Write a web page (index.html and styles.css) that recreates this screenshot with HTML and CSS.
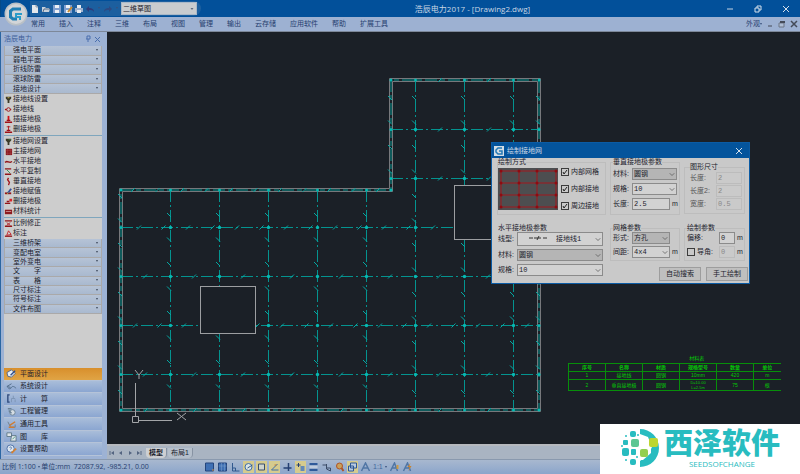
FILE: index.html
```html
<!DOCTYPE html>
<html lang="zh-CN">
<head>
  <meta charset="UTF-8">
  <meta name="viewport" content="width=device-width, initial-scale=1.0">
  <title>浩辰电力2017 - [Drawing2.dwg]</title>
  <link rel="stylesheet" href="styles.css">
</head>
<body>

<header class="titlebar">
  <button class="app-button" aria-label="应用程序菜单">
    <svg viewBox="0 0 24 24"><circle cx="12" cy="12" r="11.5" fill="#b9c0c6"/><circle cx="12" cy="12" r="10" fill="#d2d5d8"/><path d="M17 7H9L6.500 9v6L9 17h4" fill="none" stroke="#1f7fb4" stroke-width="3"/><path d="M18 12h-6v3h4v3" fill="none" stroke="#2a9cc9" stroke-width="2"/></svg>
  </button>
  <div class="quick">
    <button aria-label="新建"><svg viewBox="0 0 10 10"><path d="M2 1h4l2 2v6H2z" fill="#e4e8ec"/><path d="M6 1v2h2" fill="none" stroke="#8b98a8"/></svg></button>
    <button aria-label="打开"><svg viewBox="0 0 10 10"><path d="M1 8V3h3l1 1h3v1h1L8 8z" fill="#c8d2dc"/><path d="M2 8l1-3h6" fill="none" stroke="#586f8c"/></svg></button>
    <button aria-label="保存"><svg viewBox="0 0 10 10"><path d="M1 1h8v8H1z" fill="#7f9fd0"/><path d="M3 1h4v3H3zM3 6h4v3H3z" fill="#eef1f5"/></svg></button>
    <button aria-label="另存为"><svg viewBox="0 0 10 10"><path d="M1 1h8v8H1z" fill="#7f9fd0"/><path d="M3 1h4v3H3zM3 6h4v3H3z" fill="#eef1f5"/><path d="M9 3L5 8" stroke="#c98a2c" stroke-width="2"/></svg></button>
    <button aria-label="打印"><svg viewBox="0 0 10 10"><path d="M1 4h8v4H1z" fill="#9fb2cf"/><path d="M3 1h4v3H3zM3 6h4v3H3z" fill="#e8ecf2"/></svg></button>
    <button aria-label="放弃"><svg viewBox="0 0 10 10"><path d="M1 5l3-3v2c3 0 5 1 5 4-1-2-3-2-5-2v2z" fill="#2f3a78"/></svg></button>
    <i class="caret"></i>
    <button aria-label="重做"><svg viewBox="0 0 10 10"><path d="M9 5L6 2v2C3 4 1 5 1 8c1-2 3-2 5-2v2z" fill="#2d4a82"/></svg></button>
    <i class="caret"></i>
    <select class="workspace-select" aria-label="工作空间"><option>二维草图</option></select>
  </div>
  <h1 class="title">浩辰电力2017 - [Drawing2.dwg]</h1>
  <div class="window-buttons">
    <button aria-label="最小化"><svg viewBox="0 0 10 10"><path d="M2 5h6" stroke="#c5d3e2"/></svg></button>
    <button aria-label="还原"><svg viewBox="0 0 10 10"><path d="M2 4h4v4H2zM4 4V2h4v4H6" fill="none" stroke="#d5e0eb"/></svg></button>
    <button aria-label="关闭"><svg viewBox="0 0 10 10"><path d="M2 2l6 6M8 2L2 8" stroke="#d5e0eb"/></svg></button>
  </div>
</header>

<nav class="menubar">
  <a href="#">常用</a>
  <a href="#">插入</a>
  <a href="#">注释</a>
  <a href="#">三维</a>
  <a href="#">布局</a>
  <a href="#">视图</a>
  <a href="#">管理</a>
  <a href="#">输出</a>
  <a href="#">云存储</a>
  <a href="#">应用软件</a>
  <a href="#">帮助</a>
  <a href="#">扩展工具</a>
  <div class="doc-buttons">
    <a href="#">外观<i class="caret"></i></a>
    <button aria-label="最小化文档"><svg viewBox="0 0 8 8"><path d="M2 6h4" stroke="#444b58"/></svg></button>
    <button aria-label="还原文档"><svg viewBox="0 0 8 8"><path d="M1 3h5v4H1z" fill="#aebdd4" stroke="#6c7686"/><path d="M2 2h5" stroke="#444b58" stroke-width="2"/></svg></button>
    <button aria-label="关闭文档"><svg viewBox="0 0 8 8"><path d="M1 1l6 6M7 1L1 7" stroke="#444b58" stroke-width="1.500"/></svg></button>
  </div>
</nav>

<main class="workspace">
  <aside class="sidebar">
    <div class="sidebar-head">
      <h2>浩辰电力</h2>
      <button aria-label="固定"><svg viewBox="0 0 8 8"><path d="M2 4h4M3 4V1h3v3M4 4v3" fill="none" stroke="#4a6fae"/></svg></button>
      <button aria-label="关闭面板"><svg viewBox="0 0 8 8"><path d="M1 2l5 5M6 2L1 7" stroke="#4a6fae"/></svg></button>
    </div>
    <div class="panel">
      <div class="categories five">
        <button>强电平面</button>
        <button>弱电平面</button>
        <button>折线防雷</button>
        <button>滚球防雷</button>
        <button>接地设计</button>
      </div>
      <div class="tools">
        <button><svg viewBox="0 0 10 10"><path d="M2 2h6v2L6 6v3H4V6L2 4z" fill="#3c3a28"/><path d="M4 3h2" stroke="#c9b24a"/></svg>接地线设置</button>
        <button><svg viewBox="0 0 10 10"><path d="M1 5h7" stroke="#9e1218" stroke-width="1.500"/><circle cx="5" cy="5" r="2" fill="#cdcdcd" stroke="#9e1218"/></svg>接地线</button>
        <button><svg viewBox="0 0 10 10"><path d="M5 1v6" stroke="#d01018" stroke-width="2"/><path d="M1 8h8M3 6h4" stroke="#a01018" stroke-width="1.500"/></svg>插接地极</button>
        <button><svg viewBox="0 0 10 10"><path d="M5 1v6M3 2h4" stroke="#b01820"/><path d="M1 8h8M3 6h4" stroke="#a01018" stroke-width="1.500"/></svg>删接地极</button>
      </div>
      <div class="tools">
        <button><svg viewBox="0 0 10 10"><path d="M2 2h6v2L6 6v3H4V6L2 4z" fill="#3c3a28"/><path d="M5 3h3" stroke="#3f7d4c"/></svg>接地网设置</button>
        <button><svg viewBox="0 0 10 10"><path d="M2 2h7v7H2z" fill="#8e1a20"/><path d="M4 2v7M7 2v7M2 4h7M2 7h7" stroke="#a84a4e" stroke-width=".5"/></svg>主接地网</button>
        <button><svg viewBox="0 0 10 10"><path d="M1 6l2-1 4 1 2-1" fill="none" stroke="#93141a" stroke-width="1.500"/></svg>水平接地</button>
        <button><svg viewBox="0 0 10 10"><path d="M1 2h7M1 8h7" stroke="#93141a" stroke-width="1.500"/><path d="M3 3l4 4" stroke="#2f8d4b"/></svg>水平复制</button>
        <button><svg viewBox="0 0 10 10"><path d="M5 1L4 3l2 3-1 3" fill="none" stroke="#a3141a" stroke-width="1.500"/></svg>垂直接地</button>
        <button><svg viewBox="0 0 10 10"><path d="M1 7h7" stroke="#93141a" stroke-width="2"/><path d="M4 7l4-5" stroke="#32509c" stroke-width="2"/><path d="M3 8l2-2" stroke="#cbb234"/></svg>接地赋值</button>
        <button><svg viewBox="0 0 10 10"><path d="M1 7h6M3 5h3" stroke="#93141a" stroke-width="1.500"/><path d="M6 2h3v3H6z" fill="#d8252b"/></svg>删接地极</button>
        <button><svg viewBox="0 0 10 10"><path d="M1 3h8v5H1z" fill="#8e1a20"/><path d="M2 5h6" stroke="#c98e90"/></svg>材料统计</button>
      </div>
      <div class="tools">
        <button><svg viewBox="0 0 10 10"><path d="M1 2h8M1 8h8" stroke="#93141a" stroke-width="1.500"/><path d="M3 4l4 3M7 4L3 7" stroke="#b3242a"/></svg>比例修正</button>
        <button><svg viewBox="0 0 10 10"><path d="M1 8h8" stroke="#93141a" stroke-width="1.500"/><path d="M3 7l2-5 3 4z" fill="none" stroke="#c3242a"/></svg>标注</button>
      </div>
      <div class="categories eight">
        <button>三维桥架</button>
        <button>变配电室</button>
        <button>室外变电</button>
        <button>文　　字</button>
        <button>表　　格</button>
        <button>尺寸标注</button>
        <button>符号标注</button>
        <button>文件布图</button>
      </div>
      <div class="modules">
        <button class="active"><svg viewBox="0 0 12 12"><path d="M1 5l5-3 4 4-4 4-4-1z" fill="#e9edf2" stroke="#4b658e"/><path d="M5 8l5-5" stroke="#2d4f8f" stroke-width="1.500"/></svg>平面设计</button>
        <button><svg viewBox="0 0 12 12"><path d="M6 3L1 6l4 1M2 7c1 2 3 2 4 0s3-1 5 1" fill="none" stroke="#506b88"/></svg>系统设计</button>
        <button><svg viewBox="0 0 12 12"><path d="M4 2H2v8h2" fill="none" stroke="#2f4a7c" stroke-width="1.500"/><path d="M6 10V6M8 3v3M10 10V7M6 6h4" stroke="#7e95b5"/></svg>计　　算</button>
        <button><svg viewBox="0 0 12 12"><circle cx="7" cy="7" r="3" fill="#d5dde4" stroke="#6a8196"/><path d="M2 3h4M3 5l3 3" stroke="#6a8196" stroke-width="1.500"/></svg>工程管理</button>
        <button><svg viewBox="0 0 12 12"><path d="M2 3l3 6h5V6" fill="none" stroke="#6f7f8c"/><path d="M4 7l6-4M3 9h6" stroke="#d07c30" stroke-width="1.500"/></svg>通用工具</button>
        <button><svg viewBox="0 0 12 12"><path d="M1 2h5v4H1zM6 5h5v6H5z" fill="#dfe6ea" stroke="#5f7888"/><path d="M7 9l3-3" stroke="#4d9a7b"/></svg>图　　库</button>
        <button><svg viewBox="0 0 12 12"><circle cx="5" cy="5" r="4" fill="#dce6f0" stroke="#4a6ea5"/><path d="M4 4c1-2 3 0 1 2" fill="none" stroke="#4a6ea5"/><path d="M6 10l5-5" stroke="#d28133" stroke-width="2"/></svg>设置帮助</button>
      </div>
    </div>
  </aside>

  <section class="document">
    <div class="canvas">
      <svg class="plan" id="plan" width="693" height="412" viewBox="107 32 693 412" role="img" aria-label="接地网平面图"></svg>

      <table class="materials">
        <caption>材料表</caption>
        <tr><th>序号</th><th>名称</th><th>材质</th><th>规格型号</th><th>数量</th><th>单位</th></tr>
        <tr><td>1</td><td>接地线</td><td>圆钢</td><td>10mm</td><td>420</td><td>m</td></tr>
        <tr><td>2</td><td>垂直接地极</td><td>圆钢</td><td class="two-line">D=10.00<br>L=2.5m</td><td>75</td><td>根</td></tr>
      </table>

      <form class="dialog" aria-label="绘制接地网">
        <div class="dialog-title">
          <svg viewBox="0 0 10 10"><path d="M0 0h10v10H0z" fill="#d3dde5"/><path d="M8 2H4L2 4v2l2 2h4V5H5" fill="none" stroke="#2479b5" stroke-width="1.500"/></svg>
          <h2>绘制接地网</h2>
          <button type="button" aria-label="关闭"><svg viewBox="0 0 8 8"><path d="M1 1l6 6M7 1L1 7" stroke="#d5e0eb"/></svg></button>
        </div>
        <div class="dialog-body">
          <fieldset class="mode">
            <legend>绘制方式</legend>
            <svg class="preview" viewBox="0 0 60 42">
              <path d="M0 0h60v42H0z" fill="#4d4e50"/>
              <path d="M3 3h55v36H3zM21 3v36M39 3v36M3 15h55M3 27h55" fill="none" stroke="#a3161c"/>
              <path d="M3 3h0M21 3h0M39 3h0M58 3h0M3 15h0M21 15h0M39 15h0M58 15h0M3 27h0M21 27h0M39 27h0M58 27h0M3 39h0M21 39h0M39 39h0M58 39h0" stroke="#8e0a10" stroke-width="3" stroke-linecap="round"/>
            </svg>
            <div class="checks">
              <label><input type="checkbox" checked>内部网格</label>
              <label><input type="checkbox" checked>内部接地</label>
              <label><input type="checkbox" checked>周边接地</label>
            </div>
          </fieldset>
          <fieldset class="vertical">
            <legend>垂直接地极参数</legend>
            <div class="field"><label for="v-mat">材料:</label><select id="v-mat" class="gray"><option>圆钢</option></select></div>
            <div class="field"><label for="v-spec">规格:</label><select id="v-spec"><option>10</option></select></div>
            <div class="field"><label for="v-len">长度:</label><input id="v-len" type="text" value="2.5"><span class="unit">m</span></div>
          </fieldset>
          <fieldset class="size" disabled>
            <legend>图形尺寸</legend>
            <div class="field"><label for="s-len">长度:</label><input id="s-len" type="text" value="2"></div>
            <div class="field"><label for="s-len2">长度2:</label><input id="s-len2" type="text" value="2"></div>
            <div class="field"><label for="s-width">宽度:</label><input id="s-width" type="text" value="0.5"></div>
          </fieldset>
          <fieldset class="horizontal">
            <legend>水平接地极参数</legend>
            <div class="field"><label for="h-line">线型:</label><select id="h-line" class="linetype"><option>接地线1</option></select></div>
            <div class="field"><label for="h-mat">材料:</label><select id="h-mat" class="gray"><option>圆钢</option></select></div>
            <div class="field"><label for="h-spec">规格:</label><select id="h-spec"><option>10</option></select></div>
          </fieldset>
          <fieldset class="mesh">
            <legend>网格参数</legend>
            <div class="field"><label for="g-form">形式:</label><select id="g-form" class="gray"><option>方孔</option></select><span class="unit"></span></div>
            <div class="field"><label for="g-gap">间距:</label><select id="g-gap"><option>4x4</option></select><span class="unit">m</span></div>
          </fieldset>
          <fieldset class="draw">
            <legend>绘制参数</legend>
            <div class="field"><label for="d-off">偏移:</label><input id="d-off" type="text" value="0"><span class="unit">m</span></div>
            <div class="field"><label><input type="checkbox">导角:</label><input type="text" value="0" aria-label="导角" disabled><span class="unit">m</span></div>
          </fieldset>
          <div class="actions">
            <button type="button">自动搜索</button>
            <button type="button">手工绘制</button>
          </div>
        </div>
      </form>
    </div>

    <div class="layout-tabs">
      <button aria-label="第一个"><svg viewBox="0 0 8 8"><path d="M2 2v4" stroke="#536480"/><path d="M6 2v4L3 4z" fill="#536480"/></svg></button>
      <button aria-label="上一个"><svg viewBox="0 0 8 8"><path d="M5 2v4L2 4z" fill="#536480"/></svg></button>
      <button aria-label="下一个"><svg viewBox="0 0 8 8"><path d="M3 2v4l3-2z" fill="#536480"/></svg></button>
      <button aria-label="最后一个"><svg viewBox="0 0 8 8"><path d="M6 2v4" stroke="#536480"/><path d="M2 2v4l3-2z" fill="#536480"/></svg></button>
      <a class="tab current" href="#">模型</a>
      <a class="tab" href="#">布局1</a>
    </div>
  </section>
</main>

<footer class="statusbar">
  <p class="coords">比例 1:100 <i class="caret"></i> 单位:mm&nbsp; 72087.92, -985.21, 0.00</p>
  <div class="toggles">
    <button aria-label="捕捉"><svg viewBox="0 0 10 10"><path d="M1 1h8v8H1z" fill="#3f70b4" stroke="#24457c"/><path d="M8 8h1" stroke="#d08a3a" stroke-width="2"/></svg></button>
    <button aria-label="栅格"><svg viewBox="0 0 10 10"><path d="M1 1h8v8H1z" fill="#3f70b4" stroke="#24457c"/><path d="M4 1v8M7 1v8M1 4h8" stroke="#7ea0cc" stroke-width=".5"/></svg></button>
    <button aria-label="正交"><svg viewBox="0 0 10 10"><path d="M2 1v8h7M2 6h3v3" fill="none" stroke="#31598e"/></svg></button>
    <button class="on" aria-label="极轴"><svg viewBox="0 0 10 10"><circle cx="5" cy="5" r="3.500" fill="#dce6e4" stroke="#3f6ea8"/><path d="M4 6l5-3" stroke="#31598e"/></svg></button>
    <button class="on" aria-label="对象捕捉"><svg viewBox="0 0 10 10"><path d="M2 2h6v6H2z" fill="#cfd4cc" stroke="#3a4f6c"/></svg></button>
    <button class="on" aria-label="对象追踪"><svg viewBox="0 0 10 10"><path d="M8 2L2 8h7" fill="none" stroke="#3f6ea8"/><path d="M5 3h2" stroke="#c47a2c"/></svg></button>
    <button aria-label="动态输入"><svg viewBox="0 0 10 10"><path d="M6 1v8M1 6h8" stroke="#243f72" stroke-width="1.500"/></svg></button>
    <button class="on" aria-label="动态UCS"><svg viewBox="0 0 10 10"><path d="M3 1v4M1 3h4" stroke="#243f72"/><path d="M5 4h4v5H5z" fill="#6389b8"/></svg></button>
    <button aria-label="线宽"><svg viewBox="0 0 10 10"><path d="M1 2h8M1 8h8" stroke="#2f5a9a" stroke-width="2"/><path d="M1 5h8" stroke="#e3e8ee"/></svg></button>
    <button aria-label="循环选择"><svg viewBox="0 0 10 10"><path d="M1 3h4M5 2v5l4 2V6H5" fill="none" stroke="#3c4d68"/></svg></button>
    <button aria-label="缩放"><svg viewBox="0 0 10 10"><circle cx="5" cy="4" r="3" fill="#c9a15c" stroke="#b05325"/><path d="M7 6l2 3" stroke="#b05325" stroke-width="2"/></svg></button>
    <button class="on" aria-label="快捷特性"><svg viewBox="0 0 10 10"><path d="M3 1h6v5H3zM1 4h5v5H1z" fill="#b9cbe0" stroke="#2d5794"/></svg></button>
    <button aria-label="注释比例"><svg viewBox="0 0 10 10"><path d="M1 9l4-8 4 8M3 6h4" fill="none" stroke="#5076a5" stroke-width="1.500"/></svg></button>
    <span class="scale">1:1 <i class="caret"></i></span>
    <button aria-label="注释可见性"><svg viewBox="0 0 10 10"><path d="M1 9l4-8 3 8M3 6h4" fill="none" stroke="#5076a5" stroke-width="1.500"/><path d="M7 3h2v4H7z" fill="#cd9a43"/></svg></button>
    <button aria-label="自动缩放"><svg viewBox="0 0 10 10"><path d="M1 9l4-8 3 8M3 6h4" fill="none" stroke="#5076a5" stroke-width="1.500"/><path d="M8 1L5 5h2L6 9l3-5H7z" fill="#c9832c"/></svg></button>
  </div>
</footer>

<div class="watermark">
  <svg viewBox="0 0 40 40">
    <path d="M20 1a19 19 0 0 1 0 38v-6l8-6 4-8-4-10-8-3z" fill="#28bcc0"/>
    <path d="M19 9l4 0 8 7v9l-8 7h-4z" fill="#fff"/>
    <rect x="11" y="11" width="8" height="8" rx="2" fill="#5cc693"/>
    <rect x="20" y="21" width="8" height="8" rx="2" fill="#93cf4f"/>
    <rect x="29" y="10" width="9" height="9" rx="2" fill="#bcd631"/>
    <rect x="2" y="20" width="7" height="8" rx="2" fill="#28bcc0"/>
    <rect x="11" y="21" width="5" height="6" rx="1" fill="#28bcc0"/>
    <rect x="10" y="31" width="6" height="6" rx="2" fill="#28bcc0"/>
    <rect x="10" y="3" width="6" height="6" rx="2" fill="#28bcc0"/>
    <rect x="3" y="12" width="5" height="5" rx="1" fill="#28bcc0"/>
    <circle cx="2" cy="18" r="1" fill="#28bcc0"/><circle cx="6" cy="32" r="1" fill="#28bcc0"/><circle cx="17" cy="29" r="1" fill="#28bcc0"/><circle cx="18" cy="7" r="1" fill="#28bcc0"/><circle cx="6" cy="8" r="1" fill="#28bcc0"/>
  </svg>
  <div class="brand">
    <strong>西泽软件</strong>
    <span>SEEDSOFCHANGE</span>
  </div>
</div>

<script src="plan.js"></script>
</body>
</html>
```
FILE: styles.css
```css
* {
  box-sizing: border-box;
}

body {
  display: flex;
  flex-direction: column;
  min-height: 100vh;
  margin: 0;
  overflow: hidden;
  font-family: "Liberation Sans", "Noto Sans CJK SC", sans-serif;
  font-size: 7px;
  line-height: 8px;
  color: #1c222c;
  background: #9aafce;
}

h1, h2, p {
  margin: 0;
  font-size: inherit;
  font-weight: normal;
}

button {
  display: flex;
  align-items: center;
  padding: 0;
  border: none;
  background: none;
  color: inherit;
  font: inherit;
}

a {
  color: inherit;
  text-decoration: none;
}

svg {
  display: block;
  flex: none;
}

input, select {
  min-width: 0;
  margin: 0;
  font: inherit;
  color: inherit;
}

.caret {
  display: inline-block;
  width: 0;
  border: 1px solid transparent;
  border-top: 2px solid #38507c;
  vertical-align: middle;
}

/* title bar */
.titlebar {
  display: flex;
  align-items: center;
  height: 17px;
  padding-left: 3px;
  background: #02509a;
  border-left: 1px solid #064b88;
}

.app-button {
  align-self: flex-start;
  z-index: 1;
}

.app-button svg {
  width: 24px;
  height: 24px;
  margin-top: 2px;
}

.quick {
  display: flex;
  align-items: center;
  gap: 1px;
  height: 15px;
  margin-left: 2px;
  padding-right: 4px;
  background: #1c5f9f;
  border-radius: 0 8px 8px 0;
}

.quick svg {
  width: 10px;
  height: 10px;
}

.quick .caret {
  margin: 0 2px;
}

.workspace-select {
  appearance: none;
  width: 76px;
  height: 13px;
  padding: 0 1px;
  border: 1px solid #a9b8c8;
  border-radius: 0;
  background: #c9cccf url("data:image/svg+xml,%3Csvg xmlns='http://www.w3.org/2000/svg' viewBox='0 0 8 8'%3E%3Cpath d='M2 3h4L4 5z' fill='%23384a66'/%3E%3C/svg%3E") right 1px center / 6px 6px no-repeat;
}

.title {
  flex: 1;
  padding-left: 28px;
  text-align: center;
  font-family: "Open Sans", "Noto Sans CJK SC", sans-serif;
  font-size: 8px;
  color: #c9d6e4;
}

.window-buttons {
  display: flex;
}

.window-buttons button {
  justify-content: center;
  width: 28px;
}

.window-buttons svg {
  width: 10px;
  height: 10px;
}

/* menu bar */
.menubar {
  display: flex;
  align-items: center;
  gap: 14px;
  height: 15px;
  padding: 0 2px 0 31px;
  background: #9db1d2;
  border-bottom: 1px solid #7d8899;
  color: #27406f;
}

.doc-buttons {
  display: flex;
  align-items: center;
  gap: 4px;
  margin-left: auto;
}

.doc-buttons svg {
  width: 8px;
  height: 8px;
}

/* side panel */
.workspace {
  display: flex;
  flex: 1;
  min-height: 0;
}

.sidebar {
  display: flex;
  flex-direction: column;
  width: 107px;
  padding: 0 5px 3px 3px;
  background: #9db2d4;
  border-left: 1px solid #2b66a2;
}

.sidebar-head {
  display: flex;
  align-items: center;
  gap: 2px;
  height: 14px;
  color: #3d5f99;
}

.sidebar-head h2 {
  flex: 1;
}

.sidebar-head svg {
  width: 8px;
  height: 8px;
}

.panel {
  display: flex;
  flex: 1;
  flex-direction: column;
  background: #cdcdcd;
}

.categories {
  display: grid;
  grid-auto-rows: 1fr;
}

.five {
  height: 48px;
}

.eight {
  height: 75px;
}

.categories button {
  justify-content: space-between;
  padding: 0 3px 0 8px;
  background: linear-gradient(#b6c3d6, #a9b9cf);
  border: 1px solid #aaa9a9;
  border-top: none;
}

.categories button::after {
  content: "";
  border: 1px solid transparent;
  border-top: 2px solid #3e4a5c;
}

.tools {
  padding-bottom: 1px;
}

.tools + .tools {
  border-top: 1px solid #7fa6bd;
}

.tools button {
  width: 100%;
  height: 10px;
}

.tools svg {
  width: 9px;
  height: 9px;
}

.modules {
  display: grid;
  grid-auto-rows: 1fr;
  height: 88px;
  margin-top: auto;
}

.modules button {
  gap: 3px;
  padding-left: 2px;
  background: linear-gradient(#a9bdd9, #8ba6d1);
  border-bottom: 1px solid #b5c3d8;
}

.modules .active {
  background: linear-gradient(#d88f2c, #e0a445);
}

.modules svg {
  width: 11px;
  height: 11px;
}

/* drawing area */
.document {
  display: flex;
  flex: 1;
  flex-direction: column;
  min-width: 0;
}

.canvas {
  position: relative;
  flex: 1;
  overflow: hidden;
  background: #1b2027;
}

.wall {
  fill: none;
  stroke: #77787c;
}

.mesh-line {
  fill: none;
  stroke: #04938f;
  stroke-dasharray: 12 3 2 3;
}

.edge-line {
  fill: none;
  stroke: #04938f;
  stroke-dasharray: 12 3 5 3;
}

.tick {
  fill: none;
  stroke: #04a8a3;
}

.node {
  fill: #06b9b2;
}

.room {
  fill: #1b2027;
  stroke: #9c9ea1;
}

.ucs {
  fill: none;
  stroke: #a3a5a8;
}

.materials {
  position: absolute;
  top: 324px;
  left: 461px;
  width: 211px;
  border-collapse: collapse;
  table-layout: fixed;
  font-size: 5px;
  line-height: 5px;
  color: #05c805;
}

.materials caption {
  height: 7px;
  padding-left: 45px;
}

.materials th,
.materials td {
  width: 37px;
  height: 8px;
  padding: 0;
  border: 1px solid #078f0a;
  text-align: center;
}

.materials th:last-child,
.materials td:last-child {
  width: 27px;
  border-right: none;
}

.materials .two-line {
  font-size: 4px;
}

/* grounding grid dialog */
.dialog {
  position: absolute;
  top: 110px;
  left: 384px;
  width: 259px;
  border: 1px solid #0b5ba4;
  background: #c9c9c9;
}

.dialog-title {
  display: flex;
  align-items: center;
  gap: 3px;
  height: 15px;
  padding: 0 6px 0 2px;
  background: #04549c;
  color: #cfdbe7;
}

.dialog-title h2 {
  flex: 1;
}

.dialog-title > svg {
  width: 10px;
  height: 10px;
}

.dialog-title button svg {
  width: 8px;
  height: 8px;
}

.dialog-body {
  display: grid;
  grid-template-columns: 109px 70px 1fr;
  grid-template-rows: 66px 37px 20px;
  column-gap: 4px;
  padding: 0 1px 2px 5px;
}

fieldset {
  display: flex;
  flex-direction: column;
  gap: 2px;
  min-width: 0;
  margin: 0;
  padding: 0 2px;
  border: 1px solid #bdbdbd;
}

legend {
  height: 8px;
  padding: 0;
}

.mode {
  flex-direction: row;
  gap: 3px;
  margin-bottom: 9px;
  padding: 2px 0 0;
}

.preview {
  width: 60px;
  height: 42px;
}

.checks {
  display: flex;
  flex-direction: column;
  justify-content: space-between;
  height: 42px;
}

.checks label,
.field label {
  display: flex;
  align-items: center;
  gap: 2px;
  white-space: nowrap;
}

.field label {
  min-width: 19px;
}

[type="checkbox"] {
  appearance: none;
  width: 8px;
  height: 8px;
  border: 1px solid #3c3c3c;
}

[type="checkbox"]:checked {
  background: url("data:image/svg+xml,%3Csvg xmlns='http://www.w3.org/2000/svg' viewBox='0 0 6 6'%3E%3Cpath d='M1 3l1 2 3-4' fill='none' stroke='%23222'/%3E%3C/svg%3E");
}

.field {
  display: flex;
  align-items: center;
}

.field [type="text"],
.field select {
  flex: 1;
  width: 0;
  height: 12px;
  padding: 0 1px;
  border: 1px solid #8b8b8b;
  border-radius: 0;
  background: #d2d2d2;
  font-family: "Liberation Mono", "Noto Sans CJK SC", monospace;
}

.field select {
  appearance: none;
  background: #d2d2d2 url("data:image/svg+xml,%3Csvg xmlns='http://www.w3.org/2000/svg' viewBox='0 0 8 8'%3E%3Cpath d='M1 3l3 3 3-3' fill='none' stroke='%23555'/%3E%3C/svg%3E") right 1px center / 6px 6px no-repeat;
}

.field .gray {
  background-color: #b5b5b5;
}

.field .linetype {
  height: 14px;
  padding-left: 38px;
  background: url("data:image/svg+xml,%3Csvg xmlns='http://www.w3.org/2000/svg' viewBox='0 0 20 6'%3E%3Cpath d='M1 3h4M6 3h7M9 5l2-4M15 3h4' fill='none' stroke='%23333'/%3E%3C/svg%3E") 10px 2px / 20px 6px no-repeat,
    #d2d2d2 url("data:image/svg+xml,%3Csvg xmlns='http://www.w3.org/2000/svg' viewBox='0 0 8 8'%3E%3Cpath d='M1 3l3 3 3-3' fill='none' stroke='%23555'/%3E%3C/svg%3E") right 1px center / 6px 6px no-repeat;
}

.unit {
  width: 7px;
  padding-left: 2px;
}

.vertical {
  gap: 3px;
  margin-bottom: 9px;
  padding-top: 2px;
}

.size {
  gap: 1px;
  margin: 5px 3px 10px 0;
  padding: 1px 2px 0 5px;
}

.size label {
  width: 26px;
  color: #555;
}

.field input:disabled {
  border-color: #bcbcbc;
  background: #cacaca;
  color: #888;
}

.horizontal {
  grid-row: 2 / 4;
  gap: 3px;
  padding: 0 2px 0 0;
  border-color: transparent;
}

.draw {
  margin-right: 3px;
}

.draw .field label {
  min-width: 32px;
}

.actions {
  display: flex;
  grid-column: 2 / 4;
  align-items: flex-end;
  justify-content: flex-end;
  gap: 5px;
}

.actions button {
  justify-content: center;
  width: 42px;
  height: 14px;
  border: 1px solid #9d9d9d;
  background: #bfbfbf;
}

/* layout tabs */
.layout-tabs {
  display: flex;
  align-items: center;
  height: 15px;
  padding-left: 1px;
  background: #a9b4c2;
  border-top: 2px solid #b6b9be;
}

.layout-tabs svg {
  width: 8px;
  height: 8px;
  margin-right: 1px;
}

.tab {
  margin-left: 1px;
  padding: 1px 3px;
  background: #b5bfcb;
  border-right: 1px solid #8793a3;
  border-radius: 0 0 4px 4px;
}

.current {
  margin-left: 2px;
  background: #cdcfd2;
  font-weight: bold;
}

/* status bar */
.statusbar {
  display: flex;
  align-items: center;
  height: 15px;
  padding-left: 2px;
  background: linear-gradient(#a8b8cf, #8ba5cb);
  border-top: 1px solid #8999ae;
  color: #27406f;
}

.coords {
  width: 202px;
  font-family: "Open Sans", "Noto Sans CJK SC", sans-serif;
}

.toggles {
  display: flex;
  align-items: center;
  gap: 2px;
}

.toggles button {
  padding: 1px 0;
}

.toggles svg {
  width: 11px;
  height: 10px;
}

.toggles .on {
  background: #d6cb8e;
}

.scale {
  color: #44689b;
}

/* logo over the corner of the window */
.watermark {
  position: absolute;
  right: 0;
  bottom: 0;
  display: flex;
  align-items: flex-start;
  gap: 4px;
  width: 200px;
  height: 50px;
  padding: 4px 0 0 20px;
  background: #fff;
  color: #28bcc0;
}

.watermark svg {
  width: 40px;
  height: 40px;
}

.brand {
  display: flex;
  flex-direction: column;
  align-items: center;
}

.brand strong {
  font-size: 29px;
  line-height: 32px;
  font-weight: 900;
}

.brand span {
  font-family: "Open Sans", sans-serif;
  font-size: 8px;
}
```
FILE: plan.js
```js
const plan = document.getElementById('plan');

function add(name, attrs) {
  const el = document.createElementNS('http://www.w3.org/2000/svg', name);
  for (const key in attrs) {
    el.setAttribute(key, attrs[key]);
  }
  plan.appendChild(el);
}

function tickH(x, y) {
  add('path', { class: 'tick', d: `M${x - 2} ${y + 2}l4 -4` });
}

function tickV(x, y) {
  add('path', { class: 'tick', d: `M${x - 3} ${y - 2}l4 4` });
}

// walls and the perimeter conductor between them
add('path', { class: 'wall', d: 'M119.5 188.500H389.500V78.500H540.500V411.500H119.500Z' });
add('path', { class: 'wall', d: 'M122.5 191.500H392.500V81.500H537.500V408.500H122.500Z' });
add('path', { class: 'edge-line', d: 'M121 190H391V80H539V410H121Z' });

const columns = [170, 219, 268, 317, 366, 415, 464, 513];

// y of the row, x of its first tick, distance between ticks
const rows = [
  [129, 440, 49],
  [178, 440, 49],
  [227, 139, 24.5],
  [276, 145, 49],
  [325, 135, 24.5],
  [374, 145, 49]
];

// columns right of the step run up to the top wall
columns.forEach(x => {
  const top = x > 391 ? 80 : 190;
  add('path', { class: 'mesh-line', d: `M${x + 0.5} ${top}V410` });
  for (let y = top === 80 ? 98 : 215; y < 405; y += 24.5) {
    tickV(x, y);
  }
  add('circle', { class: 'node', cx: x + 0.5, cy: top, r: 1.5 });
  add('circle', { class: 'node', cx: x + 0.5, cy: 410, r: 1.5 });
});

rows.forEach(([y, first, step]) => {
  const left = y < 190 ? 391 : 121;
  add('path', { class: 'mesh-line', d: `M${left} ${y + 0.5}H539` });
  for (let x = first; x < 535; x += step) {
    tickH(x, y + 0.5);
  }
  add('circle', { class: 'node', cx: left, cy: y + 0.5, r: 1.5 });
  add('circle', { class: 'node', cx: 539, cy: y + 0.5, r: 1.5 });
  columns.filter(x => x > left).forEach(x => {
    add('circle', { class: 'node', cx: x + 0.5, cy: y + 0.5, r: 1.7 });
  });
});

// ticks along the perimeter
for (let x = 133; x < 391; x += 24.5) {
  tickH(x, 190);
}
tickH(440, 80);
tickH(489, 80);
for (let x = 146; x < 535; x += 49) {
  tickH(x, 410);
}
for (let y = 98; y < 405; y += 24.5) {
  tickV(539, y);
  tickV(y < 190 ? 391 : 121, y);
}

[[121, 190], [391, 190], [391, 80], [539, 80], [539, 410], [121, 410]].forEach(([x, y]) => {
  add('circle', { class: 'node', cx: x, cy: y, r: 1.5 });
});

add('rect', { class: 'room', x: 200.5, y: 286.5, width: 55, height: 47 });
add('rect', { class: 'room', x: 454.5, y: 185.5, width: 56, height: 54 });

// coordinate system icon
add('path', { class: 'ucs', d: 'M135.5 383V417M138 420.500H172M132.500 416.500H138.500V422.500H132.500Z' });
add('path', { class: 'ucs', d: 'M135 370l4 5l4 -5M139 375v4M177 413l9 7M186 413l-9 7' });
```
